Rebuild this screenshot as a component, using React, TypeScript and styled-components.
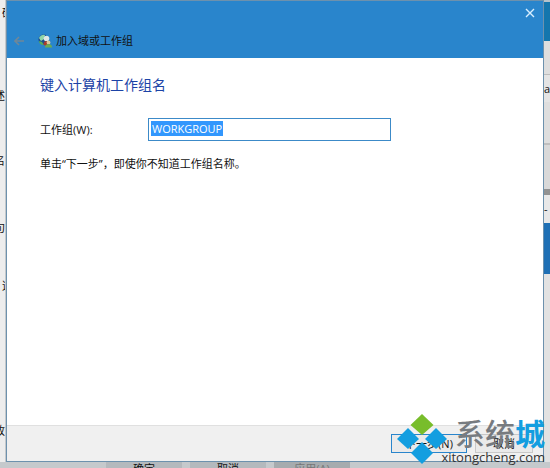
import React from "react";
import styled, { createGlobalStyle } from "styled-components";

const GlobalStyle = createGlobalStyle`
  * { box-sizing: border-box; }
  body { margin: 0; background: #e9e9e9; }
  body, button, input {
    font-family: "Open Sans", "Noto Sans CJK SC", sans-serif;
    font-size: 11px;
    color: #111;
  }
`;

const Desktop = styled.div`
  display: grid;
  grid-template-columns: 6px minmax(0, 1fr) 6px;
  grid-template-rows: minmax(0, 1fr) 6px;
  height: 100vh;
  overflow: hidden;
`;

const LeftEdge = styled.aside`
  display: grid;
  grid-template-rows: 22px 83px 65px 67px 58px 145px 1fr;
  align-items: end;
  overflow: hidden;
  background: #ededed;
  border-right: 1px solid #c4c8cb;
  line-height: 18px;
`;

const Clip = styled.span<{ $start?: boolean }>`
  display: flex;
  justify-content: ${(p) => (p.$start ? "flex-start" : "flex-end")};
  padding-left: ${(p) => (p.$start ? "2px" : "0")};
  min-width: 0;
  white-space: nowrap;
`;

const RightEdge = styled.aside`
  display: flex;
  flex-direction: column;
  overflow: hidden;
  background: #e2e2e2;
`;

const Band = styled.div<{ $h: number; $color: string }>`
  flex: 0 0 ${(p) => p.$h}px;
  background: ${(p) => p.$color};
  line-height: ${(p) => p.$h}px;
  overflow: hidden;
`;

const Dialog = styled.main`
  display: flex;
  flex-direction: column;
  min-width: 0;
  background: #fff;
  border: 1px solid #6d91ad;
`;

const TitleBar = styled.header`
  display: flex;
  flex-direction: column;
  background: #2985cc;
`;

const CloseRow = styled.div`
  display: flex;
  justify-content: flex-end;
  padding: 3px 4px 0;
`;

const IconButton = styled.button`
  display: grid;
  place-items: center;
  width: 18px;
  height: 18px;
  padding: 0;
  border: 0;
  background: transparent;
`;

const TitleRow = styled.div`
  display: flex;
  align-items: center;
  height: 36px;
  padding: 2px 3px 0;
`;

const Title = styled.h1`
  margin: 0 0 0 4px;
  font-size: 11px;
  font-weight: 400;
  line-height: 18px;
`;

const NetworkIcon = styled.svg`
  margin-left: 10px;
`;

const Content = styled.section`
  flex: 1;
  padding: 14px 33px;
`;

const Heading = styled.h2`
  margin: 0;
  color: #1c43a6;
  font-size: 14px;
  font-weight: 400;
  line-height: 26px;
`;

const Field = styled.div`
  display: grid;
  grid-template-columns: 108px minmax(0, 243px);
  align-items: center;
  margin-top: 20px;
  line-height: 16px;
`;

const TextBox = styled.div`
  display: flex;
  height: 23px;
  padding: 2px;
  border: 1px solid #3c8ac8;
  background: #fff;
`;

const TextInput = styled.input`
  field-sizing: content;
  height: 15px;
  padding: 0 1px;
  border: 0;
  outline: 0;
  background: #3297fd;
  color: #fff;
  line-height: 15px;
`;

const Hint = styled.p`
  margin: 13px 0 0;
  line-height: 20px;
`;

const Footer = styled.footer`
  position: relative;
  display: flex;
  justify-content: flex-end;
  align-items: center;
  gap: 8px;
  height: 36px;
  padding: 0 10px;
  background: #f0f0f0;
  border-top: 1px solid #e0e0e0;
`;

const Action = styled.button<{ $primary?: boolean }>`
  width: ${(p) => (p.$primary ? "76px" : "58px")};
  height: 19px;
  padding: 0;
  border: 1px solid ${(p) => (p.$primary ? "#2985cc" : "#c8c8c8")};
  background: #eaeaea;
  line-height: 16px;
`;

const Watermark = styled.div`
  position: absolute;
  right: -2px;
  bottom: -4px;
  display: flex;
  align-items: flex-end;
  pointer-events: none;
`;

const Brand = styled.div`
  display: flex;
  flex-direction: column;
  align-items: flex-end;
  margin-left: -6px;
`;

const BrandName = styled.div`
  color: #777b80;
  font-size: 30px;
  font-weight: 500;
  line-height: 32px;
`;

const BrandAccent = styled.span`
  color: #139ee0;
  font-weight: 700;
`;

const BrandSite = styled.div`
  color: #333;
  font-family: "Open Sans", sans-serif;
  font-size: 13px;
  line-height: 15px;
`;

const BottomEdge = styled.div`
  grid-column: 1 / -1;
  display: flex;
  gap: 8px;
  padding-left: 106px;
  overflow: hidden;
  background: #c5c9cc;
`;

const BackButton = styled.button`
  flex: 0 0 76px;
  height: 14px;
  padding: 0;
  border: 0;
  background: #b4b9bd;
  line-height: 12px;
  &:disabled { color: #777; background: #a6abae; }
`;

export default function App() {
  return (
    <>
      <GlobalStyle />
      <Desktop>
        <LeftEdge aria-hidden="true">
          <Clip $start>硬</Clip>
          <Clip>述</Clip>
          <Clip>名</Clip>
          <Clip>句</Clip>
          <Clip $start>这</Clip>
          <Clip>改</Clip>
        </LeftEdge>
        <Dialog>
          <TitleBar>
            <CloseRow>
              <IconButton aria-label="关闭">
                <svg width="10" height="10" viewBox="0 0 10 10" stroke="#d8efff" strokeWidth="1.4">
                  <path d="M1 1 9 9M9 1 1 9" />
                </svg>
              </IconButton>
            </CloseRow>
            <TitleRow>
              <IconButton aria-label="返回">
                <svg width="10" height="10" viewBox="0 0 10 10" fill="none" stroke="#6f8798" strokeWidth="1.6">
                  <path d="M5 1 1 5l4 4M1 5h9" />
                </svg>
              </IconButton>
              <NetworkIcon width="14" height="14" viewBox="0 0 14 14" aria-hidden="true">
                <circle cx="5.5" cy="5.5" r="5" fill="#1b4f8f" />
                <path d="M1 4q2-4 6-3L6 5 3 7z" fill="#8fd6a8" />
                <path d="M1 7l3 1 2 3Q1 11 1 7" fill="#57ad5c" />
                <circle cx="8.5" cy="4.5" r="2.800" fill="#dfe8e6" />
                <path d="M5.500 11q0-4 3-4l2 2-2 3z" fill="#a83c2e" />
                <circle cx="10.5" cy="8.500" r="1.900" fill="#d9c79c" />
                <path d="M7 13.500q0-3.500 3.500-3.500t3.500 3.500z" fill="#6cab55" />
              </NetworkIcon>
              <Title>加入域或工作组</Title>
            </TitleRow>
          </TitleBar>
          <Content>
            <Heading>键入计算机工作组名</Heading>
            <Field>
              <label htmlFor="workgroup">工作组(W):</label>
              <TextBox>
                <TextInput id="workgroup" defaultValue="WORKGROUP" />
              </TextBox>
            </Field>
            <Hint>单击“下一步”，即使你不知道工作组名称。</Hint>
          </Content>
          <Footer>
            <Action $primary>下一步(N)</Action>
            <Action>取消</Action>
            <Watermark>
              <svg width="50" height="52" viewBox="0 0 50 52" aria-hidden="true">
                <path d="M25 1 36.500 12 25 22 13.500 12z" fill="#78bd2b" />
                <path d="M11 15 22 26 11 36 0 26z" fill="#139ee0" />
                <path d="M39 15 50 26 39 36 28 26z" fill="#139ee0" />
                <path d="M25 29 36 40 25 51 14 40z" fill="#139ee0" />
              </svg>
              <Brand>
                <BrandName>系统<BrandAccent>城</BrandAccent></BrandName>
                <BrandSite>xitongcheng.com</BrandSite>
              </Brand>
            </Watermark>
          </Footer>
        </Dialog>
        <RightEdge aria-hidden="true">
          <Band $h={2} $color="#b5c3cc" />
          <Band $h={39} $color="#1476ad" />
          <Band $h={33} $color="#dedede" />
          <Band $h={1} $color="#bdbdbd" />
          <Band $h={27} $color="#e4e4e4">a</Band>
          <Band $h={41} $color="#dedede" />
          <Band $h={2} $color="#bfbfbf" />
          <Band $h={44} $color="#d9d9d9" />
          <Band $h={6} $color="#929292" />
          <Band $h={28} $color="#e8e8e8">-</Band>
          <Band $h={51} $color="#1f70b5" />
        </RightEdge>
        <BottomEdge>
          <BackButton>确定</BackButton>
          <BackButton>取消</BackButton>
          <BackButton disabled>应用(A)</BackButton>
        </BottomEdge>
      </Desktop>
    </>
  );
}
